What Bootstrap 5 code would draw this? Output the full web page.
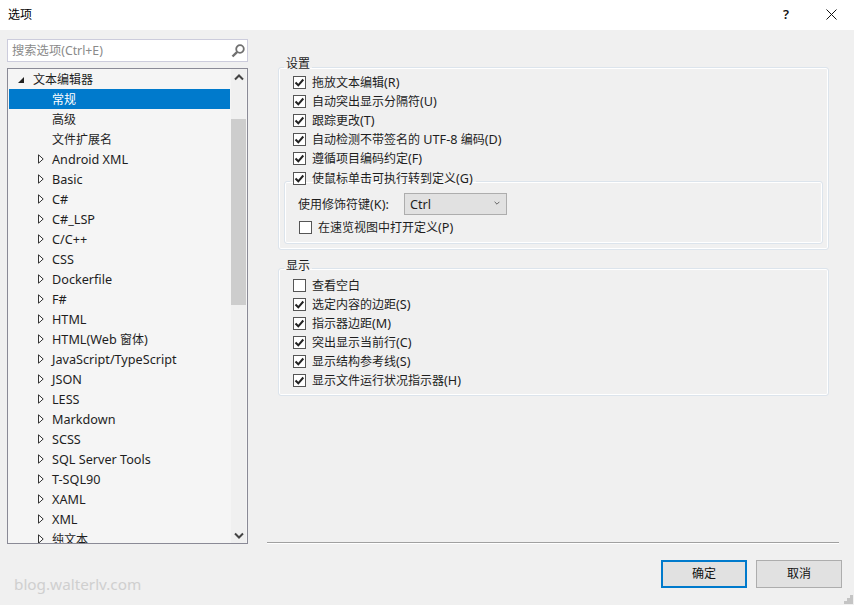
<!DOCTYPE html>
<html lang="zh-CN">
<head>
<meta charset="utf-8">
<title>选项</title>
<link href="https://cdn.jsdelivr.net/npm/bootstrap@5.3.0/dist/css/bootstrap.min.css" rel="stylesheet">
<script src="https://cdn.jsdelivr.net/npm/bootstrap@5.3.0/dist/js/bootstrap.bundle.min.js"></script>
<style>
html,body{height:605px;overflow:hidden}
body{width:854px;background:#f0f0f0;color:#1e1e1e;font:12px/15px "Noto Sans","Noto Sans CJK SC",sans-serif;position:relative}
.lt{font-size:12.65px}
.title-strip{height:30px;background:#fff;padding:0 0 2px 8px}
.title-txt{color:#000}
.cap-btn{width:20px;height:28px;color:#111}
.q-mark{margin-right:25px;font-size:13px;font-weight:600}
.x-mark{margin-right:13px}
.main-area{height:575px}
.side{width:241px;margin-left:7px;padding-top:9px}
.search-wrap{height:23px;background:#fff;border:1px solid #ccccdc;padding:0 2px 0 4px;color:#8a8a8a}
.search-field{border:0;outline:0;background:transparent;padding:0;font:inherit;font-size:12.3px;color:#8a8a8a;min-width:0}
.search-field::placeholder{color:#8a8a8a;opacity:1}
.tree-box{height:476px;margin-top:6px;border:1px solid #8a8a96;background:#f5f5f5;overflow:hidden}
.tree-list{width:221px;margin-left:1px;padding-top:1px;height:474px;overflow:hidden}
.tree-row{height:20px;border:0;border-radius:0;background:transparent;padding:0;color:#1e1e1e;flex:none}
.tree-row.active{background:#007acc;color:#fff}
.caret-slot{width:14px;flex:none}
.lvl0{padding-left:8px}
.lvl0 .caret-slot{width:12px}
.lvl1{padding-left:29px}
.lvl2{padding-left:43px}
.tree-label{white-space:nowrap}
.lvl0 .tree-label{margin:0 0 1px 4px}
.scroll-col{width:15px;margin-left:1px;background:#f0f0f0}
.scroll-btn{height:16px;flex:none}
.scroll-gap{height:34px;flex:none}
.scroll-thumb{height:186px;flex:none;background:#cdcdcd}
.content-col{width:576px;margin-left:30px;padding-top:26px}
.grp{border:1px solid #dce4ec;border-radius:3px;margin:0;width:551px;padding:0 0 0 14px;box-shadow:inset 0 0 0 1px #fff}
.grp>legend{float:none;width:auto;font-size:12px;line-height:15px;margin:0 0 0 -9px;padding:0 2px 8px;color:#1e1e1e}
.grp>legend+*{margin-top:-6px}
.grp1{height:194px}
.grp2{height:138px;margin-top:8px}
.grp2>legend{padding-bottom:6px}
.grp2>legend+*{margin-top:-3px}
.chk-row{height:19px;min-height:0;margin:0;padding:0;white-space:nowrap;gap:6px}
.chk-row .form-check-input{width:13px;height:13px;margin:0;flex:none;border:1px solid #555;border-radius:0;background-color:#fff;box-shadow:none;background-size:13px 13px}
.chk-row .form-check-input:checked{background-color:#fff;border-color:#555;background-image:url("data:image/svg+xml,%3csvg xmlns='http://www.w3.org/2000/svg' viewBox='0 0 13 13'%3e%3cpath fill='none' stroke='%23222' stroke-width='2' d='M2.5 6.5l2.8 2.8 5-5.8'/%3e%3c/svg%3e")}
.chk-row .form-check-label{margin:0}
.inner-grp{border:1px solid #dce4ec;border-radius:3px;margin:1px 0 0 -9px;width:539px;height:75px;padding:0 0 0 14px;box-shadow:inset 0 0 0 1px #fff}
.inner-legend{float:none;width:auto;padding:0 3px 6px 3px;margin:0 0 0 -9px;font-size:12px;line-height:15px}
.mod-row{height:22px;margin-top:-1px;margin-left:-1px}
.mod-label{width:106px}
.mod-select{width:103px;height:22px;padding:0 0 0 5px;border:1px solid #adadad;border-radius:0;background-color:#e1e1e1;font:inherit;font-size:12.65px;color:#1e1e1e;box-shadow:none;background-position:right 6px top 7px;background-size:6px 4px;background-image:url("data:image/svg+xml,%3csvg xmlns='http://www.w3.org/2000/svg' viewBox='0 0 7 5'%3e%3cpath fill='none' stroke='%23444' d='M.5 1l3 3 3-3'/%3e%3c/svg%3e")}
.peek-row{margin-top:3px}
.sep-line{height:2px;width:572px;background:#a0a0a0;border-bottom:1px solid #fff;position:absolute;top:542px;left:267px}
.watermark{position:absolute;left:14px;top:574px;font-size:15.3px;line-height:20px;color:#cfcfcf}
.dlg-btn{width:86px;height:28px;border-radius:0;background:#e1e1e1;border:1px solid #adadad;color:#111;font-size:12px;padding:0;line-height:1}
.dlg-btn.prime{border:2px solid #007acc}
.foot-btns{position:absolute;left:661px;top:560px;gap:9px}
.grip{position:absolute;right:1px;bottom:1px}
</style>
</head>
<body>
<div class="title-strip d-flex align-items-center">
  <span class="title-txt flex-grow-1">选项</span>
  <span class="cap-btn q-mark d-flex align-items-center justify-content-center">?</span>
  <span class="cap-btn x-mark d-flex align-items-center justify-content-center">
    <svg width="11" height="11" viewBox="0 0 11 11"><path d="M.5.5l10 10M10.5.5l-10 10" stroke="#111" fill="none"/></svg>
  </span>
</div>
<div class="main-area d-flex">
  <div class="side">
    <div class="search-wrap d-flex align-items-center">
      <input class="search-field flex-grow-1" placeholder="搜索选项(Ctrl+E)">
      <svg width="14" height="14" viewBox="0 0 14 14"><circle cx="9" cy="5" r="3.8" fill="none" stroke="#707070" stroke-width="1.8"/><path d="M6.2 7.8L1.5 12.5" stroke="#707070" stroke-width="2.4" fill="none"/></svg>
    </div>
    <div class="tree-box d-flex">
      <div class="tree-list list-group d-flex flex-column">
        <div class="list-group-item tree-row lvl0 d-flex align-items-center"><span class="caret-slot"><svg width="8" height="8" viewBox="0 0 8 8" class="d-block"><path d="M7 1v6H1z" fill="#222"/></svg></span><span class="tree-label">文本编辑器</span></div>
        <div class="list-group-item tree-row active lvl2 d-flex align-items-center"><span class="tree-label">常规</span></div>
        <div class="list-group-item tree-row lvl2 d-flex align-items-center"><span class="tree-label">高级</span></div>
        <div class="list-group-item tree-row lvl2 d-flex align-items-center"><span class="tree-label">文件扩展名</span></div>
        <div class="list-group-item tree-row lvl1 d-flex align-items-center"><span class="caret-slot"><svg width="6" height="10" viewBox="0 0 6 10" class="d-block"><path d="M.5.8v8.4L5.2 5z" fill="#fff" stroke="#333"/></svg></span><span class="tree-label lt">Android XML</span></div>
        <div class="list-group-item tree-row lvl1 d-flex align-items-center"><span class="caret-slot"><svg width="6" height="10" viewBox="0 0 6 10" class="d-block"><path d="M.5.8v8.4L5.2 5z" fill="#fff" stroke="#333"/></svg></span><span class="tree-label lt">Basic</span></div>
        <div class="list-group-item tree-row lvl1 d-flex align-items-center"><span class="caret-slot"><svg width="6" height="10" viewBox="0 0 6 10" class="d-block"><path d="M.5.8v8.4L5.2 5z" fill="#fff" stroke="#333"/></svg></span><span class="tree-label lt">C#</span></div>
        <div class="list-group-item tree-row lvl1 d-flex align-items-center"><span class="caret-slot"><svg width="6" height="10" viewBox="0 0 6 10" class="d-block"><path d="M.5.8v8.4L5.2 5z" fill="#fff" stroke="#333"/></svg></span><span class="tree-label lt">C#_LSP</span></div>
        <div class="list-group-item tree-row lvl1 d-flex align-items-center"><span class="caret-slot"><svg width="6" height="10" viewBox="0 0 6 10" class="d-block"><path d="M.5.8v8.4L5.2 5z" fill="#fff" stroke="#333"/></svg></span><span class="tree-label lt">C/C++</span></div>
        <div class="list-group-item tree-row lvl1 d-flex align-items-center"><span class="caret-slot"><svg width="6" height="10" viewBox="0 0 6 10" class="d-block"><path d="M.5.8v8.4L5.2 5z" fill="#fff" stroke="#333"/></svg></span><span class="tree-label lt">CSS</span></div>
        <div class="list-group-item tree-row lvl1 d-flex align-items-center"><span class="caret-slot"><svg width="6" height="10" viewBox="0 0 6 10" class="d-block"><path d="M.5.8v8.4L5.2 5z" fill="#fff" stroke="#333"/></svg></span><span class="tree-label lt">Dockerfile</span></div>
        <div class="list-group-item tree-row lvl1 d-flex align-items-center"><span class="caret-slot"><svg width="6" height="10" viewBox="0 0 6 10" class="d-block"><path d="M.5.8v8.4L5.2 5z" fill="#fff" stroke="#333"/></svg></span><span class="tree-label lt">F#</span></div>
        <div class="list-group-item tree-row lvl1 d-flex align-items-center"><span class="caret-slot"><svg width="6" height="10" viewBox="0 0 6 10" class="d-block"><path d="M.5.8v8.4L5.2 5z" fill="#fff" stroke="#333"/></svg></span><span class="tree-label lt">HTML</span></div>
        <div class="list-group-item tree-row lvl1 d-flex align-items-center"><span class="caret-slot"><svg width="6" height="10" viewBox="0 0 6 10" class="d-block"><path d="M.5.8v8.4L5.2 5z" fill="#fff" stroke="#333"/></svg></span><span class="tree-label"><span class="lt">HTML(Web </span>窗体<span class="lt">)</span></span></div>
        <div class="list-group-item tree-row lvl1 d-flex align-items-center"><span class="caret-slot"><svg width="6" height="10" viewBox="0 0 6 10" class="d-block"><path d="M.5.8v8.4L5.2 5z" fill="#fff" stroke="#333"/></svg></span><span class="tree-label lt">JavaScript/TypeScript</span></div>
        <div class="list-group-item tree-row lvl1 d-flex align-items-center"><span class="caret-slot"><svg width="6" height="10" viewBox="0 0 6 10" class="d-block"><path d="M.5.8v8.4L5.2 5z" fill="#fff" stroke="#333"/></svg></span><span class="tree-label lt">JSON</span></div>
        <div class="list-group-item tree-row lvl1 d-flex align-items-center"><span class="caret-slot"><svg width="6" height="10" viewBox="0 0 6 10" class="d-block"><path d="M.5.8v8.4L5.2 5z" fill="#fff" stroke="#333"/></svg></span><span class="tree-label lt">LESS</span></div>
        <div class="list-group-item tree-row lvl1 d-flex align-items-center"><span class="caret-slot"><svg width="6" height="10" viewBox="0 0 6 10" class="d-block"><path d="M.5.8v8.4L5.2 5z" fill="#fff" stroke="#333"/></svg></span><span class="tree-label lt">Markdown</span></div>
        <div class="list-group-item tree-row lvl1 d-flex align-items-center"><span class="caret-slot"><svg width="6" height="10" viewBox="0 0 6 10" class="d-block"><path d="M.5.8v8.4L5.2 5z" fill="#fff" stroke="#333"/></svg></span><span class="tree-label lt">SCSS</span></div>
        <div class="list-group-item tree-row lvl1 d-flex align-items-center"><span class="caret-slot"><svg width="6" height="10" viewBox="0 0 6 10" class="d-block"><path d="M.5.8v8.4L5.2 5z" fill="#fff" stroke="#333"/></svg></span><span class="tree-label lt">SQL Server Tools</span></div>
        <div class="list-group-item tree-row lvl1 d-flex align-items-center"><span class="caret-slot"><svg width="6" height="10" viewBox="0 0 6 10" class="d-block"><path d="M.5.8v8.4L5.2 5z" fill="#fff" stroke="#333"/></svg></span><span class="tree-label lt">T-SQL90</span></div>
        <div class="list-group-item tree-row lvl1 d-flex align-items-center"><span class="caret-slot"><svg width="6" height="10" viewBox="0 0 6 10" class="d-block"><path d="M.5.8v8.4L5.2 5z" fill="#fff" stroke="#333"/></svg></span><span class="tree-label lt">XAML</span></div>
        <div class="list-group-item tree-row lvl1 d-flex align-items-center"><span class="caret-slot"><svg width="6" height="10" viewBox="0 0 6 10" class="d-block"><path d="M.5.8v8.4L5.2 5z" fill="#fff" stroke="#333"/></svg></span><span class="tree-label lt">XML</span></div>
        <div class="list-group-item tree-row lvl1 d-flex align-items-center"><span class="caret-slot"><svg width="6" height="10" viewBox="0 0 6 10" class="d-block"><path d="M.5.8v8.4L5.2 5z" fill="#fff" stroke="#333"/></svg></span><span class="tree-label">纯文本</span></div>
      </div>
      <div class="scroll-col d-flex flex-column">
        <div class="scroll-btn d-flex align-items-center justify-content-center"><svg width="10" height="7" viewBox="0 0 10 7"><path d="M1 5.5l4-4 4 4" fill="none" stroke="#444" stroke-width="2"/></svg></div>
        <div class="scroll-gap"></div>
        <div class="scroll-thumb"></div>
        <div class="flex-grow-1"></div>
        <div class="scroll-btn d-flex align-items-center justify-content-center"><svg width="10" height="7" viewBox="0 0 10 7"><path d="M1 1.5l4 4 4-4" fill="none" stroke="#444" stroke-width="2"/></svg></div>
      </div>
    </div>
  </div>
  <div class="content-col">
    <fieldset class="grp grp1">
      <legend>设置</legend>
      <div class="form-check chk-row d-flex align-items-center"><input class="form-check-input" type="checkbox" checked id="a1"><label class="form-check-label" for="a1">拖放文本编辑<span class="lt">(R)</span></label></div>
      <div class="form-check chk-row d-flex align-items-center"><input class="form-check-input" type="checkbox" checked id="a2"><label class="form-check-label" for="a2">自动突出显示分隔符<span class="lt">(U)</span></label></div>
      <div class="form-check chk-row d-flex align-items-center"><input class="form-check-input" type="checkbox" checked id="a3"><label class="form-check-label" for="a3">跟踪更改<span class="lt">(T)</span></label></div>
      <div class="form-check chk-row d-flex align-items-center"><input class="form-check-input" type="checkbox" checked id="a4"><label class="form-check-label" for="a4">自动检测不带签名的<span class="lt"> UTF-8 </span>编码<span class="lt">(D)</span></label></div>
      <div class="form-check chk-row d-flex align-items-center"><input class="form-check-input" type="checkbox" checked id="a5"><label class="form-check-label" for="a5">遵循项目编码约定<span class="lt">(F)</span></label></div>
      <fieldset class="inner-grp">
        <legend class="inner-legend"><span class="form-check chk-row d-flex align-items-center"><input class="form-check-input" type="checkbox" checked id="a6"><label class="form-check-label" for="a6">使鼠标单击可执行转到定义<span class="lt">(G)</span></label></span></legend>
        <div class="mod-row d-flex align-items-center">
          <label class="mod-label" for="m1">使用修饰符键<span class="lt">(K):</span></label>
          <select class="form-select mod-select" id="m1"><option>Ctrl</option></select>
        </div>
        <div class="form-check chk-row peek-row d-flex align-items-center"><input class="form-check-input" type="checkbox" id="a7"><label class="form-check-label" for="a7">在速览视图中打开定义<span class="lt">(P)</span></label></div>
      </fieldset>
    </fieldset>
    <fieldset class="grp grp2">
      <legend>显示</legend>
      <div class="form-check chk-row d-flex align-items-center"><input class="form-check-input" type="checkbox" id="b1"><label class="form-check-label" for="b1">查看空白</label></div>
      <div class="form-check chk-row d-flex align-items-center"><input class="form-check-input" type="checkbox" checked id="b2"><label class="form-check-label" for="b2">选定内容的边距<span class="lt">(S)</span></label></div>
      <div class="form-check chk-row d-flex align-items-center"><input class="form-check-input" type="checkbox" checked id="b3"><label class="form-check-label" for="b3">指示器边距<span class="lt">(M)</span></label></div>
      <div class="form-check chk-row d-flex align-items-center"><input class="form-check-input" type="checkbox" checked id="b4"><label class="form-check-label" for="b4">突出显示当前行<span class="lt">(C)</span></label></div>
      <div class="form-check chk-row d-flex align-items-center"><input class="form-check-input" type="checkbox" checked id="b5"><label class="form-check-label" for="b5">显示结构参考线<span class="lt">(S)</span></label></div>
      <div class="form-check chk-row d-flex align-items-center"><input class="form-check-input" type="checkbox" checked id="b6"><label class="form-check-label" for="b6">显示文件运行状况指示器<span class="lt">(H)</span></label></div>
    </fieldset>
  </div>
</div>
<div class="sep-line"></div>
<div class="watermark">blog.walterlv.com</div>
<div class="foot-btns d-flex">
  <button type="button" class="btn dlg-btn prime">确定</button>
  <button type="button" class="btn dlg-btn">取消</button>
</div>
<svg class="grip" width="9" height="9" viewBox="0 0 9 9"><path d="M6 0h3v3H6zM3 3h3v3H3zM6 3h3v3H6zM0 6h3v3H0zM3 6h3v3H3zM6 6h3v3H6z" fill="#c4c4c4"/></svg>
</body>
</html>
